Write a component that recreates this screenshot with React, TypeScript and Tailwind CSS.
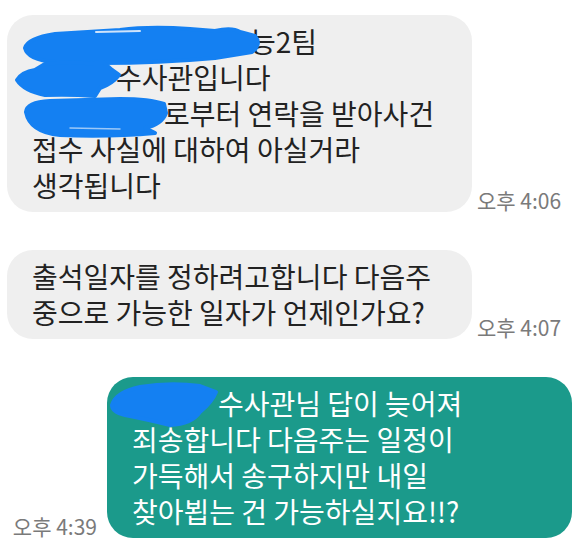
const bubbleGray =
  "w-[465px] rounded-[26px] bg-[#efefef] px-[25px] pt-[8px] pb-[9px] text-[28px] leading-[36px] text-[#222222] whitespace-nowrap";
const bubbleMine =
  "w-[465px] rounded-[26px] bg-[#1b9a8b] px-[25px] pt-[8px] pb-[9px] text-[28px] leading-[36px] text-white whitespace-nowrap";
const time = "text-[21px] leading-[24px] text-[#7a7a7a] whitespace-nowrap";

/** Blue marker scribbles that hide names in the screenshot */
function Scribbles() {
  return (
    <svg className="pointer-events-none absolute inset-0" width="584" height="550" viewBox="0 0 584 550">
      <g fill="#1480f2" stroke="#1480f2" strokeWidth="4" strokeLinejoin="round">
        <path d="M25 48 Q28 38 55 34 L120 30 Q150 26 190 29 L215 31 Q232 27 240 32 L255 36 Q262 44 252 52 L215 58 Q160 63 100 63 L55 62 Q28 60 25 48 Z" />
        <path d="M17 80 Q22 72 35 70 L45 64 Q70 61 95 64 L103 62 L112 70 L119 75 Q112 84 100 88 L95 96 Q70 94 45 95 Q24 91 17 80 Z" />
        <path d="M26 112 Q27 102 50 101 L120 99 Q150 99 164 104 L166 113 Q162 124 145 128 L155 133 Q110 137 60 135 Q30 132 26 112 Z" />
        <path d="M112 405 Q116 392 140 387 Q170 382 200 386 L216 392 Q212 402 200 412 Q192 424 170 425 Q150 420 125 415 Q112 412 112 405 Z" />
      </g>
      <path d="M96 32 L140 31" stroke="#cfe3fb" strokeWidth="2" strokeLinecap="round" />
      <path d="M70 128 L120 129" stroke="#9cc8f8" strokeWidth="1.5" strokeLinecap="round" />
    </svg>
  );
}

export default function App() {
  return (
    <div className="relative h-[550px] w-[584px] overflow-hidden bg-white font-['Noto_Sans_CJK_KR',sans-serif]">
      <div className="flex flex-col gap-[38px] pt-[15px]">
        <div className="flex items-end gap-[5px] pl-[7px]">
          <div className={bubbleGray}>
            <div>
              <span className="inline-block w-[218px]" />능2팀
            </div>
            <div>
              <span className="inline-block w-[84px]" />수사관입니다
            </div>
            <div>
              <span className="inline-block w-[132px]" />로부터 연락을 받아사건
            </div>
            <div>접수 사실에 대하여 아실거라</div>
            <div>생각됩니다</div>
          </div>
          <span className={time}>오후 4:06</span>
        </div>

        <div className="flex items-end gap-[5px] pl-[7px]">
          <div className={bubbleGray}>
            <div>출석일자를 정하려고합니다 다음주</div>
            <div>중으로 가능한 일자가 언제인가요?</div>
          </div>
          <span className={time}>오후 4:07</span>
        </div>

        <div className="flex items-end justify-end gap-[10px] pr-[12px]">
          <span className={time}>오후 4:39</span>
          <div className={bubbleMine}>
            <div>
              <span className="inline-block w-[86px]" />수사관님 답이 늦어져
            </div>
            <div>죄송합니다 다음주는 일정이</div>
            <div>가득해서 송구하지만 내일</div>
            <div>찾아뵙는 건 가능하실지요!!?</div>
          </div>
        </div>
      </div>
      <Scribbles />
    </div>
  );
}
